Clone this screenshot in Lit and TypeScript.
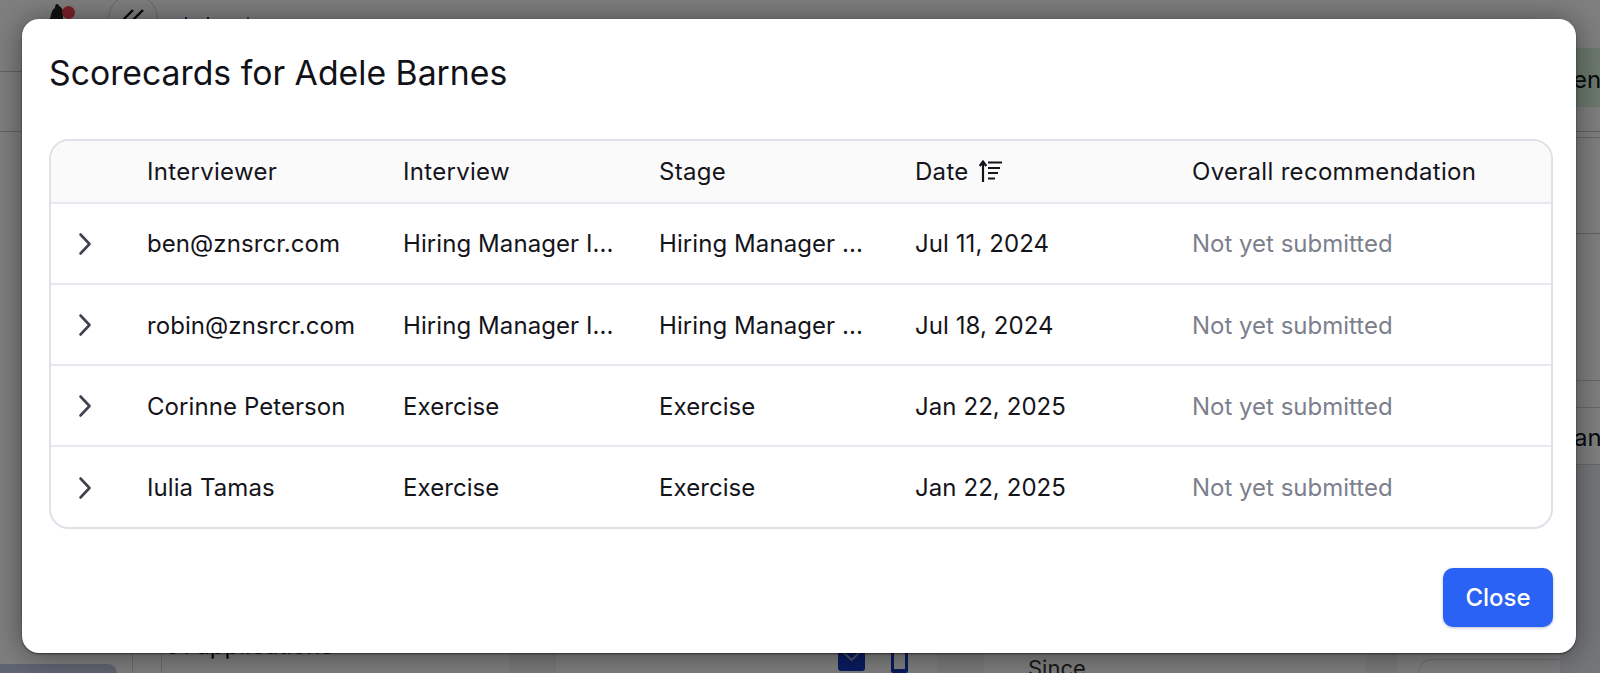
import { LitElement, html, css, svg } from "lit";
import { customElement } from "lit/decorators.js";

const ROWS = [
  ["ben@znsrcr.com", "Hiring Manager I...", "Hiring Manager ...", "Jul 11, 2024"],
  ["robin@znsrcr.com", "Hiring Manager I...", "Hiring Manager ...", "Jul 18, 2024"],
  ["Corinne Peterson", "Exercise", "Exercise", "Jan 22, 2025"],
  ["Iulia Tamas", "Exercise", "Exercise", "Jan 22, 2025"],
];

@customElement("app-root")
export class AppRoot extends LitElement {
  static styles = css`
    :host { display: block; position: relative; width: 1600px; height: 673px; overflow: hidden; background: #fff; font-family: Inter, "Liberation Sans", sans-serif; color: #14141a; }

    /* page behind the dialog */
    .page { display: flex; flex-direction: column; height: 673px; }
    .topbar { height: 72px; box-sizing: border-box; flex: none; display: flex; padding-left: 48px; border-bottom: 1px solid #c4c4c4; position: relative; }
    .bell { width: 20px; height: 18px; margin-top: 4px; flex: none; }
    .dot { width: 13px; height: 13px; border-radius: 50%; background: #fa4052; margin: 6px 0 0 -6px; flex: none; }
    .collapse { width: 50px; height: 50px; margin: -6px 0 0 33px; border: 1px solid #d0d0d0; border-radius: 50%; box-sizing: border-box; flex: none; display: flex; align-items: center; justify-content: center; }
    .collapse svg { margin-bottom: 4px; }
    .crumbs { display: flex; gap: 20px; margin: 17px 0 0 27px; }
    .crumbs i { width: 2px; height: 2px; background: #1430d0; }
    .crumbs i:last-child { margin-left: 18px; background: #777; }
    .subbar { height: 60px; box-sizing: border-box; flex: none; border-bottom: 1px solid #c4c4c4; }
    .body { flex: 1; display: flex; align-items: flex-end; }
    .side { width: 133px; box-sizing: border-box; align-self: stretch; display: flex; align-items: flex-end; border-right: 1px solid #d8d8d8; flex: none; }
    .side-box { width: 117px; height: 9px; background: #c0cbe4; border-radius: 0 12px 0 0; }
    .gutter { width: 29px; box-sizing: border-box; align-self: stretch; border-right: 1px solid #d8d8d8; flex: none; }
    .apps { width: 348px; box-sizing: border-box; padding-left: 3px; margin-bottom: 14.5px; font-size: 24px; line-height: 26px; flex: none; }
    .strips { width: 46px; align-self: stretch; flex: none; border-left: 1px solid #eee; border-right: 1px solid #eee; background: #f4f4f4; box-sizing: border-box; }
    .contact { width: 381px; box-sizing: border-box; display: flex; align-items: flex-end; gap: 27px; justify-content: flex-end; padding-right: 29px; flex: none; }
    .mail { width: 27px; height: 24px; background: #1438c0; border-radius: 3px; margin: 0 -1px 2px 0; display: block; }
    .phone { width: 17px; height: 30px; border: 3px solid #1438c0; border-bottom-width: 4px; border-radius: 2px; box-sizing: border-box; }
    .band { width: 47px; align-self: stretch; background: #f4f4f4; flex: none; }
    .since { width: 382px; box-sizing: border-box; padding-left: 44px; font-size: 22px; line-height: 16px; height: 13px; flex: none; color: #333; white-space: nowrap; }
    .band2 { width: 31px; align-self: stretch; background: #f4f4f4; flex: none; }
    .card { flex: 1; height: 13px; margin-left: 21px; border: 1px solid #e0e0e0; border-right: 0; border-bottom: 0; border-radius: 14px 0 0 0; }

    .rail { position: absolute; top: 0; right: 0; width: 40px; height: 673px; display: flex; flex-direction: column; font-size: 24px; overflow: hidden; }
    .rail > div { box-sizing: border-box; flex: none; white-space: nowrap; }
    .r-a { height: 48px; }
    .r-green { height: 59px; background: #d9f2dc; line-height: 64px; text-indent: 13px; }
    .r-b { height: 31px; border-bottom: 1px solid #d0d0d0; }
    .r-c { height: 96px; border-bottom: 1px solid #c4c4c4; }
    .r-d { height: 147px; border-bottom: 1px solid #d0d0d0; }
    .r-e { height: 27px; border-bottom: 1px solid #d0d0d0; }
    .r-f { height: 57px; line-height: 60px; text-indent: 14px; border-bottom: 1px solid #d0d0d0; }
    .rail > .r-g { flex: 1; background: #e8ecf2; }

    .scrim { position: absolute; inset: 0; background: rgba(0, 0, 0, 0.5); }

    /* dialog */
    .modal { position: absolute; left: 22px; top: 18.5px; width: 1554px; height: 634px; box-sizing: border-box; padding: 0 23px 26px 27px; background: #fff; border-radius: 17px; box-shadow: 0 2px 30px rgba(0, 0, 0, 0.45), 0 1px 2px rgba(0, 0, 0, 0.5); display: flex; flex-direction: column; }
    h2 { margin: 32px 0 0; font-size: 33.75px; line-height: 44px; font-weight: 400; color: #111118; }
    .table { margin-top: 44px; border: 2px solid #dfe1e8; border-radius: 20px; overflow: hidden; font-size: 24px; letter-spacing: 0.08px; }
    .row { display: grid; grid-template-columns: 96px 256px 256px 256px 277px 1fr; align-items: center; height: 81.25px; box-sizing: border-box; border-top: 2px solid #e8e9ee; padding-top: 1.5px; }
    .row.head { height: 61px; border-top: 0; padding-top: 0; background: #fafafa; letter-spacing: 0.3px; }
    .chev { display: block; margin-left: 26px; }
    .muted { color: #7c7f8c; letter-spacing: 0; }
    .date { display: flex; align-items: center; gap: 10px; }
    .foot { margin-top: auto; display: flex; justify-content: flex-end; }
    button { width: 110px; height: 59px; border: 0; border-radius: 10px; background: #2b62f6; color: #fff; font: 500 24px Inter, "Liberation Sans", sans-serif; box-shadow: 0 1px 3px rgba(20, 40, 90, 0.3); padding: 0; }
  `;

  private chevron() {
    return svg`<svg class="chev" width="16" height="24" viewBox="0 0 16 24" fill="none" stroke="#3f4350" stroke-width="2.6" stroke-linecap="round" stroke-linejoin="round"><path d="M3.500 2.500 12.500 12 3.500 21.500"/></svg>`;
  }

  render() {
    return html`
      <div class="page">
        <div class="topbar">
          <svg class="bell" viewBox="0 0 20 18"><path d="M9 0c1.300 0 2 .9 2 2 2.500 1 4 3.500 4 6v10H1c0-3 1.500-4 2-7 .4-3 1.800-6 4-7 0-2 .7-4 2-4z" fill="#222"/></svg>
          <span class="dot"></span>
          <div class="collapse">
            <svg width="24" height="16" viewBox="0 0 24 16" fill="none" stroke="#111" stroke-width="2.4"><path d="M12 1 1 12l4 4M22 1 11 12l4 4"/></svg>
          </div>
          <div class="crumbs"><i></i><i></i><i></i></div>
        </div>
        <div class="subbar"></div>
        <div class="body">
          <div class="side"><div class="side-box"></div></div>
          <div class="gutter"></div>
          <div class="apps">61 applications</div>
          <div class="strips"></div>
          <div class="contact">
            <svg class="mail" viewBox="0 0 27 24" fill="none" stroke="#9aa6d0" stroke-width="2"><path d="M6 6l7.500 7L21 6"/></svg>
            <div class="phone"></div>
          </div>
          <div class="band"></div>
          <div class="since">Since</div>
          <div class="band2"></div>
          <div class="card"></div>
        </div>
      </div>
      <div class="rail">
        <div class="r-a"></div>
        <div class="r-green">en</div>
        <div class="r-b"></div>
        <div class="r-c"></div>
        <div class="r-d"></div>
        <div class="r-e"></div>
        <div class="r-f">an</div>
        <div class="r-g"></div>
      </div>
      <div class="scrim"></div>
      <div class="modal" role="dialog">
        <h2>Scorecards for Adele Barnes</h2>
        <div class="table">
          <div class="row head">
            <span></span>
            <span>Interviewer</span>
            <span>Interview</span>
            <span>Stage</span>
            <span class="date">Date
              <svg width="24" height="24" viewBox="0 0 24 24" fill="none" stroke="#14141a" stroke-width="2.2"><path d="M4 23V3M.7 7 4 2.500 7.300 7"/><path d="M9 3.500h14M9 9h12M9 14h10M9 19.500h7" stroke-width="2"/></svg>
            </span>
            <span>Overall recommendation</span>
          </div>
          ${ROWS.map(
            (r) => html`<div class="row">
              ${this.chevron()}
              <span>${r[0]}</span>
              <span>${r[1]}</span>
              <span>${r[2]}</span>
              <span>${r[3]}</span>
              <span class="muted">Not yet submitted</span>
            </div>`
          )}
        </div>
        <div class="foot"><button>Close</button></div>
      </div>
    `;
  }
}
